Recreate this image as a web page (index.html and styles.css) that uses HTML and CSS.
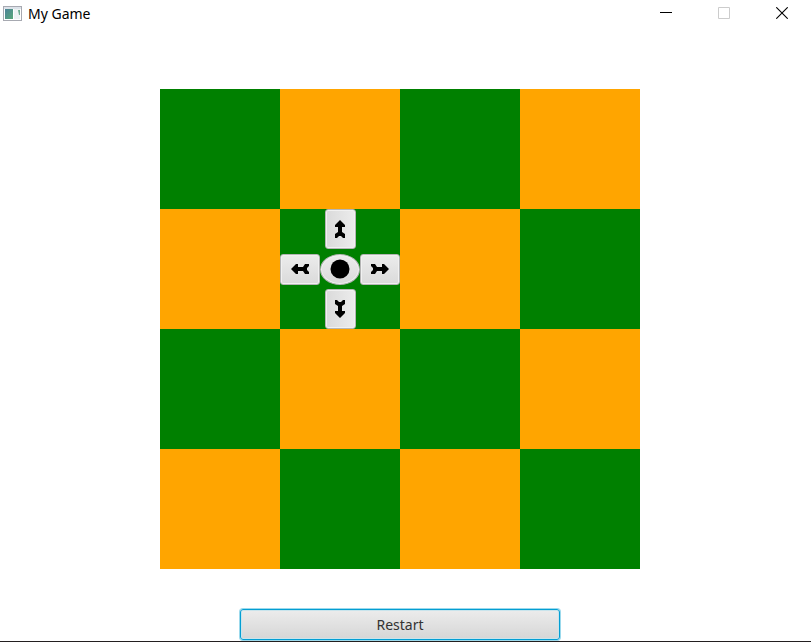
FILE: index.html
```html
<!DOCTYPE html>
<html lang="en">
<head>
<meta charset="utf-8">
<title>My Game</title>
<link rel="stylesheet" href="styles.css">
</head>
<body>
<header class="titlebar">
  <svg class="app-icon" width="19" height="15" viewBox="0 0 19 15" aria-hidden="true">
    <defs><linearGradient id="pane" x1="0" y1="0" x2="1" y2="1"><stop offset="0" stop-color="#4c8298"/><stop offset="1" stop-color="#58a878"/></linearGradient></defs>
    <rect x=".5" y=".5" width="18" height="14" fill="#fff" stroke="#a7a9b1"/>
    <rect x="1" y="1" width="17" height="2" fill="#dce2e9"/>
    <rect x="2" y="3" width="8" height="10" fill="url(#pane)"/>
    <rect x="11" y="3" width="6" height="10" fill="#edf2f3"/>
    <path d="M15 4h2v5h-1z" fill="#6eac91"/>
  </svg>
  <h1 class="title">My Game</h1>
  <div class="controls">
    <button class="control" aria-label="Minimize"><svg width="12" height="12" viewBox="0 0 12 12"><path d="M0 5.5h12" stroke="#000"/></svg></button>
    <button class="control" aria-label="Maximize" disabled><svg width="12" height="12" viewBox="0 0 12 12"><path d="M.5.5h11v11H.5z" fill="none" stroke="#ccc"/></svg></button>
    <button class="control" aria-label="Close"><svg width="12" height="12" viewBox="0 0 12 12"><path d="M.3.3l11.4 11.4M11.7.3.3 11.7" stroke="#000" stroke-width="1.1"/></svg></button>
  </div>
</header>
<main class="game">
  <div class="board">
    <div class="cell green"></div><div class="cell"></div><div class="cell green"></div><div class="cell"></div>
    <div class="cell"></div>
    <div class="cell green pad">
      <button class="key up" aria-label="Up"><svg width="10" height="18" viewBox="0 0 10 18"><path d="M5 0l5 5v2H7v5l3 2v4H8L6 16H4l-2 2H0v-4l3-2V7H0V5z"/></svg></button>
      <button class="key left" aria-label="Left"><svg width="18" height="10" viewBox="0 0 18 10"><path d="M0 5l5-5h2v3h5l2-3h4v2l-2 2v2l2 2v2h-4l-2-3H7v3H5z"/></svg></button>
      <button class="key center" aria-label="Center"><svg width="20" height="20" viewBox="0 0 20 20"><circle cx="10" cy="10" r="9.5"/></svg></button>
      <button class="key right" aria-label="Right"><svg width="18" height="10" viewBox="0 0 18 10"><path d="M18 5l-5-5h-2v3H6L4 0H0v2l2 2v2L0 8v2h4l2-3h5v3h2z"/></svg></button>
      <button class="key down" aria-label="Down"><svg width="10" height="18" viewBox="0 0 10 18"><path d="M5 18l5-5v-2H7V6l3-2V0H8L6 2H4L2 0H0v4l3 2v5H0v2z"/></svg></button>
    </div>
    <div class="cell"></div><div class="cell green"></div>
    <div class="cell green"></div><div class="cell"></div><div class="cell green"></div><div class="cell"></div>
    <div class="cell"></div><div class="cell green"></div><div class="cell"></div><div class="cell green"></div>
  </div>
  <button class="restart">Restart</button>
</main>
</body>
</html>
```
FILE: styles.css
```css
* { box-sizing: border-box; }
body {
  margin: 0;
  min-height: 100vh;
  display: flex;
  flex-direction: column;
  background: #fff;
  border-bottom: 1px solid #231f20;
  font-family: "Noto Sans", "Open Sans", sans-serif;
}
button { padding: 0; border: 0; background: none; font: inherit; }
svg { display: block; }
.titlebar { display: flex; align-items: center; height: 26px; padding-left: 3px; }
.title { margin: 0 0 0 6px; font-size: 14px; font-weight: 400; line-height: 20px; padding-top: 1px; }
.controls { display: flex; margin-left: auto; }
.control { display: flex; align-items: center; justify-content: center; width: 58px; height: 26px; }
.game { display: flex; flex-direction: column; align-items: center; padding: 63px 11px 0 0; }
.board { display: grid; grid-template-columns: repeat(4, 120px); grid-auto-rows: 120px; }
.cell { background: #ffa500; }
.green { background: #008000; }
.pad { display: grid; grid-template-columns: repeat(3, 40px); grid-template-rows: repeat(3, 40px); place-items: center; }
.key {
  display: flex;
  align-items: center;
  justify-content: center;
  width: 40px;
  height: 31px;
  border: 1px solid #b5b5b5;
  border-radius: 3px;
  background: linear-gradient(#ececec, #dadada);
  box-shadow: inset 0 0 0 1px #f1f1f1;
  color: #000;
}
.up, .down { grid-column: 2; width: 31px; height: 40px; background: linear-gradient(90deg, #dadada, #ececec); }
.left { grid-column: 1; grid-row: 2; }
.center { grid-column: 2; grid-row: 2; border-radius: 50%; }
.right { grid-column: 3; grid-row: 2; }
.restart {
  width: 320px;
  height: 31px;
  margin-top: 40px;
  border: 1px solid #039ed3;
  border-radius: 3px;
  background: linear-gradient(#ececec, #d6d6d6);
  box-shadow: 0 0 0 1px #9bd9ec, inset 0 0 0 1px #c9e4ec;
  color: #333;
  font-size: 14px;
}
```
